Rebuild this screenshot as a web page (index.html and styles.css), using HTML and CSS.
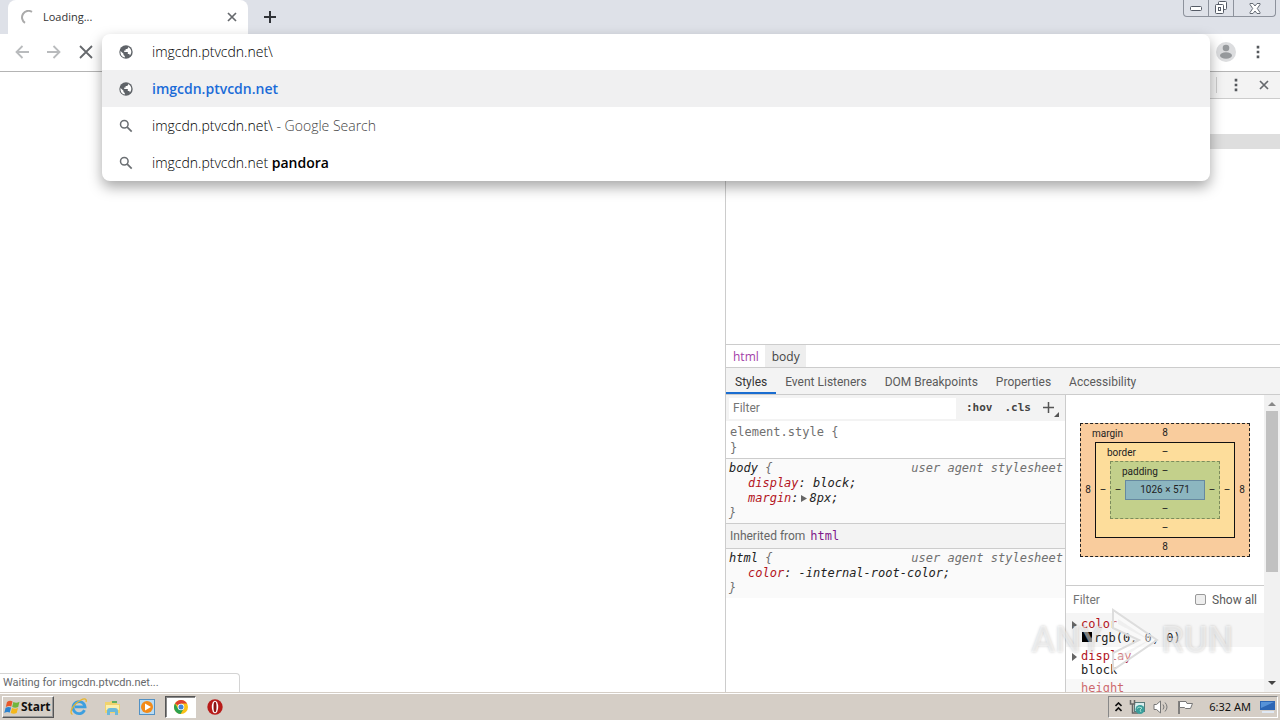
FILE: index.html
```html
<!DOCTYPE html>
<html lang="en">
<head>
<meta charset="utf-8">
<title>Loading...</title>
<link rel="stylesheet" href="styles.css">
</head>
<body>
<svg class="defs" aria-hidden="true">
  <symbol id="globe" viewBox="0 0 14 14"><circle cx="7" cy="7" r="6.7" fill="#5f6368"/><path d="M1.500 6 4.500 8.700v1.200l1.300 1v1.600C2.800 12 1.200 9.500 1.500 6zM6.500 1.500h2.700v1.400L8 4H6.600v1.600H5.200V7h3.600v2h1.500l.6 1.400c2-2.200 2-5.700-.7-7.700L9.200 1.500z" fill="#fff"/></symbol>
  <symbol id="lens" viewBox="0 0 14 14"><circle cx="5.300" cy="5.300" r="3.800" fill="none" stroke="#6b6f73" stroke-width="1.500"/><path d="m8.200 8.200 4.500 4.500" stroke="#6b6f73" stroke-width="1.700"/></symbol>
  <symbol id="dots" viewBox="0 0 4 14"><path d="M.7.800h2.600v2.600H.7zM.7 5.700h2.600v2.600H.7zM.7 10.600h2.600v2.600H.7z" fill="#55585c"/></symbol>
  <symbol id="cross" viewBox="0 0 10 10"><path d="m1 1 8 8M9 1 1 9" stroke="#66696d" stroke-width="1.700"/></symbol>
</svg>

<div class="browser">
  <header class="tabstrip">
    <div class="tab">
      <svg class="spinner" viewBox="0 0 14 14"><path d="M12 1.900A6 6 0 1 0 5 12.800" fill="none" stroke="#aaa" stroke-width="2"/></svg>
      <span class="tab-title">Loading...</span>
      <button class="icon-btn" aria-label="Close tab"><svg width="10" height="10"><use href="#cross"/></svg></button>
    </div>
    <button class="icon-btn new-tab" aria-label="New tab"><svg width="12" height="12" viewBox="0 0 12 12"><path d="M6 0v12M0 6h12" stroke="#303338" stroke-width="2"/></svg></button>
    <div class="window-controls">
      <button aria-label="Minimize"><svg width="12" height="5" viewBox="0 0 12 5"><rect x=".5" y=".5" width="11" height="4" rx="1" fill="#fff" stroke="#555b66"/></svg></button>
      <button aria-label="Restore"><svg width="14" height="14" viewBox="0 0 14 14" fill="#fff" stroke="#555b66"><rect x="4.500" y=".5" width="8" height="8" rx="1"/><rect x="1.500" y="3.500" width="8" height="9" rx="1"/><rect x="4.500" y="6.500" width="2" height="3"/></svg></button>
      <button class="wide" aria-label="Close"><svg width="12" height="11" viewBox="0 0 12 11"><path d="M1 .5h3l2 2.500 2-2.500h3v1L8.300 5.500 11 9.500v1H8L6 8l-2 2.500H1v-1l2.700-4L1 1.500z" fill="#fff" stroke="#666c76"/></svg></button>
    </div>
  </header>

  <nav class="toolbar">
    <button class="icon-btn" aria-label="Back"><svg width="14" height="14" viewBox="0 0 14 14"><path d="M14 7H1.500M7.500 1l-6 6 6 6" fill="none" stroke="#b9bbbd" stroke-width="1.800"/></svg></button>
    <button class="icon-btn" aria-label="Forward"><svg width="14" height="14" viewBox="0 0 14 14"><path d="M0 7h12.500M6.500 1l6 6-6 6" fill="none" stroke="#b9bbbd" stroke-width="1.800"/></svg></button>
    <button class="icon-btn" aria-label="Stop"><svg width="14" height="14" viewBox="0 0 14 14"><path d="m1 1 12 12M13 1 1 13" stroke="#66696d" stroke-width="1.800"/></svg></button>
    <button class="icon-btn profile" aria-label="Profile"><svg width="20" height="20" viewBox="0 0 20 20"><circle cx="10" cy="10" r="10" fill="#dcdddf"/><circle cx="10" cy="6" r="3.300" fill="#96999c"/><ellipse cx="10" cy="13.500" rx="6" ry="3.200" fill="#96999c"/></svg></button>
    <button class="icon-btn" aria-label="Menu"><svg width="4" height="14"><use href="#dots"/></svg></button>

    <div class="omnibox">
      <div class="row"><svg width="14" height="14"><use href="#globe"/></svg><input type="text" aria-label="Address" value="imgcdn.ptvcdn.net\"></div>
      <div class="row selected"><svg width="14" height="14"><use href="#globe"/></svg><a href="#">imgcdn.ptvcdn.net</a></div>
      <div class="row"><svg width="14" height="14"><use href="#lens"/></svg><span>imgcdn.ptvcdn.net\ <i>- Google Search</i></span></div>
      <div class="row"><svg width="14" height="14"><use href="#lens"/></svg><span>imgcdn.ptvcdn.net <b>pandora</b></span></div>
    </div>
  </nav>

  <div class="content">
    <main class="page"><div class="status">Waiting for imgcdn.ptvcdn.net...</div></main>

    <aside class="devtools">
      <div class="dt-toolbar">
        <span class="divider"></span>
        <button class="icon-btn" aria-label="Customize"><svg width="4" height="14"><use href="#dots"/></svg></button>
        <button class="icon-btn" aria-label="Close DevTools"><svg width="10" height="10"><use href="#cross"/></svg></button>
      </div>
      <div class="tree"><div class="tree-line"></div></div>
      <div class="crumbs"><a href="#" class="crumb">html</a><a href="#" class="crumb current">body</a></div>
      <div class="dt-tabs">
        <button class="active">Styles</button><button>Event Listeners</button><button>DOM Breakpoints</button><button>Properties</button><button>Accessibility</button>
      </div>
      <div class="panes">
        <section class="styles">
          <div class="filter-bar">
            <input type="text" placeholder="Filter" aria-label="Filter styles">
            <button>:hov</button><button>.cls</button>
            <button class="add" aria-label="New rule"><svg width="17" height="18" viewBox="0 0 17 18"><path d="M5.500 3v11M0 8.500h11" stroke="#555" stroke-width="1.500"/><path d="M16 13v5h-5z" fill="#555"/></svg></button>
          </div>
          <div class="rule plain"><div class="muted">element.style {</div><div class="muted">}</div></div>
          <div class="rule agent">
            <div class="head"><span>body <span class="muted">{</span></span><span class="muted">user agent stylesheet</span></div>
            <div class="prop"><em>display</em>: block;</div>
            <div class="prop"><em>margin</em>:<svg width="9" height="8" viewBox="0 0 9 8"><path d="M2 1v7l6-3.500z" fill="#666"/></svg><span class="value">8px;</span></div>
            <div class="muted">}</div>
          </div>
          <div class="inherited">Inherited from <a href="#">html</a></div>
          <div class="rule agent last">
            <div class="head"><span>html <span class="muted">{</span></span><span class="muted">user agent stylesheet</span></div>
            <div class="prop"><em>color</em>: -internal-root-color;</div>
            <div class="muted">}</div>
          </div>
        </section>
        <section class="computed">
          <div class="computed-body">
            <div class="metrics">
              <div class="box margin"><span class="name">margin</span><span class="top">8</span><span class="side">8</span>
                <div class="box border"><span class="name">border</span><span class="top">–</span><span class="side">–</span>
                  <div class="box padding"><span class="name">padding</span><span class="top">–</span><span class="side">–</span>
                    <div class="size">1026 × 571</div>
                    <span class="side">–</span><span class="bottom">–</span></div>
                  <span class="side">–</span><span class="bottom">–</span></div>
                <span class="side">8</span><span class="bottom">8</span></div>
            </div>
            <div class="computed-filter"><input type="text" placeholder="Filter" aria-label="Filter computed"><label><input type="checkbox">Show all</label></div>
            <div class="computed-list">
              <div class="item shade"><svg width="6" height="8" viewBox="0 0 6 8"><path d="M0 0v8l5-4z" fill="#666"/></svg><div><em>color</em><br><span class="swatch"></span>rgb(0, 0, 0)</div></div>
              <div class="item"><svg width="6" height="8" viewBox="0 0 6 8"><path d="M0 0v8l5-4z" fill="#666"/></svg><div><em>display</em><br>block</div></div>
              <div class="item shade faded"><span></span><div><em>height</em></div></div>
            </div>
          </div>
          <div class="scrollbar">
            <svg width="8" height="4" viewBox="0 0 8 4"><path d="m0 4 4-4 4 4z" fill="#888"/></svg>
            <span class="thumb"></span>
            <svg width="8" height="4" viewBox="0 0 8 4"><path d="m0 0 4 4 4-4z" fill="#444"/></svg>
          </div>
        </section>
      </div>
    </aside>
  </div>
</div>

<footer class="taskbar">
  <button class="start"><svg width="17" height="17" viewBox="0 0 17 17"><path d="M3 3c2-1.500 4-1.500 5.500-.500L7.300 7.600C5.600 6.700 4 7 1.800 8z" fill="#e8582a"/><path d="M9.300 3c2 1 4 1 6.200-.2L14.200 8c-2 1.100-4 1-6 .1z" fill="#72b63b"/><path d="M1.600 8.800c2-1 3.800-1.100 5.500-.2l-1.300 5c-1.700-.9-3.500-.8-5.500.3z" fill="#2d83cf"/><path d="M8 9c2 .9 4 1 6 0l-1.300 5c-2 1.100-4 1-6 .1z" fill="#f4b71b"/></svg>Start</button>
  <button class="task" aria-label="Internet Explorer"><svg width="18" height="18" viewBox="0 0 18 18"><path d="M14.500 12.200A6 6 0 1 1 15 8.800H5" fill="none" stroke="#3d9fdf" stroke-width="2.800"/><path d="M2.500 16.500C-1.500 15 3 6 11 2c4-2 6-1 5 2" fill="none" stroke="#e8b52c" stroke-width="1.300"/></svg></button>
  <button class="task" aria-label="Explorer"><svg width="17" height="17" viewBox="0 0 17 17"><path d="M1 3h5l1-1h6v3h3v9H1z" fill="#f1d36c"/><path d="M2 6h13v5H2z" fill="#fbefad"/><path d="M3 16v-4q0-3 3-3h5q3 0 3 3v4h-3v-3H6v3z" fill="#6cb9da"/><path d="M8 2h5v2H8z" fill="#61af61"/></svg></button>
  <button class="task" aria-label="Media Player"><svg width="16" height="16" viewBox="0 0 16 16"><rect x=".5" y=".5" width="15" height="15" fill="#b9dbf3" stroke="#5291c4"/><circle cx="8" cy="8" r="6" fill="#f28a18"/><path d="M6 4.500v7L12 8z" fill="#fff"/></svg></button>
  <button class="task pressed" aria-label="Chrome"><svg width="14" height="14" viewBox="0 0 14 14"><circle cx="7" cy="7" r="7" fill="#fbc116"/><path d="M7 7 1 3.400A7 7 0 0 1 13.100 3.600H7z" fill="#df4130"/><path d="M1 3.400A7 7 0 0 0 6.600 14L9.500 9 4 8.500z" fill="#2da14f"/><circle cx="7" cy="7" r="3.300" fill="#fff"/><circle cx="7" cy="7" r="2.500" fill="#4285d8"/></svg></button>
  <button class="task" aria-label="Opera"><svg width="16" height="16" viewBox="0 0 16 16"><circle cx="8" cy="8" r="7.700" fill="#b81b19"/><ellipse cx="8" cy="8" rx="3.200" ry="6.300" fill="#fff"/><ellipse cx="8" cy="8" rx="1.500" ry="5.300" fill="#8b1413"/></svg></button>
  <div class="tray">
    <svg width="7" height="10" viewBox="0 0 7 10"><path d="m.5 4 3-3 3 3M.5 9l3-3 3 3" fill="none" stroke="#111" stroke-width="1.600"/></svg>
    <svg class="net" width="17" height="16" viewBox="0 0 17 16"><rect x="5.500" y="3.500" width="10" height="9" fill="#d8eeee" stroke="#587a7a"/><path d="M1.500 1v4h4V1M3.500 5v9h6" fill="none" stroke="#666" stroke-width="1.500"/><circle cx="11" cy="10.500" r="4.500" fill="#3b9e9b"/><path d="M8 9.500 10 8l3 1-2 2 1 2" fill="none" stroke="#a5dfcf"/></svg>
    <svg width="17" height="14" viewBox="0 0 17 14"><path d="M1 4.500h2.500l4-3.500v12l-4-3.500H1z" fill="#fff" stroke="#777"/><path d="M10 4.500q2 2.500 0 5M12 2.500q4 4.500 0 9" fill="none" stroke="#777"/></svg>
    <svg width="17" height="15" viewBox="0 0 17 15"><path d="M2 1v13" stroke="#666" stroke-width="1.500"/><path d="M2.500 1.500H9l1 2h5.500l-2 5H8.500l-1-1h-5z" fill="#fff" stroke="#777"/></svg>
    <time>6:32 AM</time>
    <svg class="desk" width="16" height="14" viewBox="0 0 16 14"><path d="M0 1h15v9H0z" fill="#2d66b5"/><path d="M1 2h13L1 8z" fill="#5792d8"/><path d="M2 11h12v2H2z" fill="#dfe8f4"/></svg>
  </div>
</footer>

<div class="watermark" aria-hidden="true"><span>ANY</span><svg width="50" height="66" viewBox="0 0 50 66"><path d="M3 3v18l26 12L3 46v17l44-30z" fill="#fff" fill-opacity=".4" stroke="#ddd" stroke-width="2"/><path d="M8 12v5l31 16L8 49v5l32-21z" fill="#e2e2e2" fill-opacity=".4"/></svg><span>RUN</span></div>
</body>
</html>
```

FILE: styles.css
```css
* { box-sizing: border-box; }
body {
  margin: 0;
  height: 100vh;
  display: flex;
  flex-direction: column;
  overflow: hidden;
  font: 12px/16px "Noto Sans", "Open Sans", sans-serif;
  color: #333;
  background: #fff;
}
button, input { font: inherit; color: inherit; margin: 0; padding: 0; border: 0; background: none; }
a { text-decoration: none; color: inherit; }
em { font-style: inherit; color: #b3141c; }
svg { flex: none; }
.defs { position: absolute; width: 0; height: 0; }
.icon-btn { display: flex; align-items: center; justify-content: center; flex: none; }
.browser { flex: 1; min-height: 0; display: flex; flex-direction: column; }

/* Tab strip */
.tabstrip { height: 34px; flex: none; display: flex; align-items: flex-start; padding-left: 8px; background: #dee1e8; }
.tab {
  width: 240px; height: 34px; padding: 0 11px 0 12px;
  display: flex; align-items: center; gap: 9px;
  background: #fff; border-radius: 8px 8px 0 0;
}
.spinner { width: 14px; height: 14px; }
.tab-title { flex: 1; font: 11px/16px "Open Sans", sans-serif; }
.new-tab { width: 44px; height: 34px; }
.window-controls {
  margin-left: auto; margin-right: 4px; display: flex; height: 17px;
  border: 1px solid #8d929c; border-top: 0; border-radius: 0 0 4px 4px;
}
.window-controls button { width: 25px; display: flex; align-items: center; justify-content: center; border-right: 1px solid #8d929c; }
.window-controls .wide { width: 41px; border: 0; }

/* Toolbar and address suggestions */
.toolbar {
  position: relative; height: 38px; flex: none;
  display: flex; align-items: center; gap: 18px; padding: 0 20px 2px 15px;
  background: #fff; border-bottom: 1px solid #b4b4b4;
}
.profile { margin: 0 2px 0 auto; }
.omnibox {
  position: absolute; z-index: 2; top: 0; left: 102px; right: 70px;
  background: #fff; border-radius: 8px; overflow: hidden;
  font: 300 14px/20px "Open Sans", sans-serif; color: #000;
  box-shadow: 0 6px 14px rgba(0, 0, 0, .35);
}
.row { height: 37px; display: flex; align-items: center; gap: 19px; padding: 0 17px; }
.row:first-child { height: 36px; }
.row input { flex: 1; outline: 0; }
.row i { font-style: normal; color: #444; }
.row b { font-weight: 600; }
.selected { background: #f0f0f1; }
.selected a { color: #1a6bd8; font-weight: 600; }

/* Page and devtools */
.content { flex: 1; min-height: 0; display: grid; grid-template-columns: 725fr 555fr; }
.page { display: flex; align-items: flex-end; min-width: 0; }
.status {
  width: 240px; height: 19px; padding: 0 3px;
  font: 11px/18px Roboto, sans-serif; color: #66696c;
  border: 1px solid #d4d4d4; border-left: 0; border-bottom: 0; border-radius: 0 4px 0 0;
}
.devtools { min-width: 0; min-height: 0; display: flex; flex-direction: column; border-left: 1px solid #ccc; color: #5a5a5a; }
.dt-toolbar {
  height: 27px; flex: none; display: flex; align-items: center; justify-content: flex-end;
  gap: 17px; padding-right: 11px; background: #f3f3f3; border-bottom: 1px solid #ccc;
}
.dt-toolbar .icon-btn:last-child { margin-left: 4px; }
.divider { width: 1px; height: 16px; background: #ccc; }
.tree { flex: 1; min-height: 0; padding-top: 35px; }
.tree-line { height: 15px; background: #dedede; }
.crumbs { height: 23px; flex: none; display: flex; border-top: 1px solid #ccc; font: 12px/23px "Open Sans", sans-serif; }
.crumb { padding: 0 6px 0 7px; color: #a33ea8; }
.crumb.current { background: #eee; color: #444; }
.dt-tabs { height: 28px; flex: none; display: flex; background: #f3f3f3; border: solid #ccc; border-width: 1px 0; font: 12px/16px Roboto, sans-serif; }
.dt-tabs button { padding: 3px 9px 0; border-bottom: 2px solid transparent; white-space: nowrap; }
.dt-tabs .active { color: #333; border-color: #1a6dd0; }
.panes { height: 297px; flex: none; display: grid; grid-template-columns: 1fr 215px; }
.styles { min-width: 0; font: italic 12px/15px "DejaVu Sans Mono", monospace; color: #222; }
.filter-bar { height: 26px; display: flex; align-items: center; background: #f3f3f3; font: bold 11px/16px "DejaVu Sans Mono", monospace; color: #444; }
.filter-bar input { flex: 1; min-width: 0; height: 21px; margin: 0 10px 0 3px; padding: 0 4px; background: #fff; font: 12px/20px Roboto, sans-serif; }
::placeholder { color: #757575; opacity: 1; }
.filter-bar button { margin-right: 12px; }
.filter-bar .add { margin-right: 5px; display: flex; }
.muted { color: #707070; }
.rule { padding: 2px 2px 2px 3px; border-bottom: 1px solid #ccc; }
.plain { padding: 3px 4px 2px; font-style: normal; line-height: 16px; }
.agent { background: #fafafa; }
.last { border: 0; }
.head { display: flex; justify-content: space-between; white-space: nowrap; }
.prop { padding-left: 19px; }
.value { padding-left: 2px; }
.inherited { height: 25px; padding: 0 4px; background: #f3f3f3; border-bottom: 1px solid #ccc; font: 12px/24px Roboto, sans-serif; color: #666; }
.inherited a { font-family: "DejaVu Sans Mono", monospace; color: #81178a; margin-left: 2px; }

/* Computed sidebar */
.computed { display: flex; min-width: 0; border-left: 1px solid #ccc; overflow: hidden; }
.computed-body { flex: 1; min-width: 0; }
.metrics { padding: 28px 14px; height: 190px; font: 10px/20px Roboto, sans-serif; color: #222; }
.box {
  position: relative; display: grid; height: 100%;
  grid-template: 18px 1fr 18px / 14px 1fr 14px;
  align-items: center; justify-items: center;
}
.box > .box, .size { grid-area: 2 / 2; align-self: stretch; justify-self: stretch; }
.name { position: absolute; left: 11px; top: 0; }
.top { grid-area: 1 / 2; }
.bottom { grid-area: 3 / 2; }
.side { grid-row: 2; grid-column: 1; }
.box > div + .side { grid-column: 3; }
.margin { background: #f9cc9d; border: 1px dashed #222; }
.border { background: #fddd9b; border: 1px solid #111; }
.padding { background: #c3d08b; border: 1px dashed #7d8c5c; }
.size { background: #8cb6c0; border: 1px solid #6689a0; text-align: center; white-space: nowrap; line-height: 18px; }
.computed-filter { height: 28px; display: flex; align-items: center; justify-content: space-between; padding: 0 7px; border-top: 1px solid #ccc; font: 12px/16px Roboto, sans-serif; }
.computed-filter > input { width: 90px; }
.computed-filter label { display: flex; align-items: center; gap: 6px; }
input[type="checkbox"] { appearance: none; width: 11px; height: 11px; border: 1px solid #999; border-radius: 2px; background: #eee; }
.computed-list { font: 12px/14px "DejaVu Sans Mono", monospace; color: #222; }
.item { display: grid; grid-template-columns: 6px 1fr; gap: 3px; padding: 2px 6px; min-height: 32px; }
.item svg { margin-top: 4px; }
.shade { background: #f5f5f5; }
.item:first-child { padding-top: 4px; min-height: 34px; }
.faded { opacity: .65; }
.swatch { display: inline-block; width: 10px; height: 10px; margin: 0 2px 0 1px; background: #000; }
.scrollbar { width: 16px; padding: 7px 0; display: flex; flex-direction: column; align-items: center; background: #f1f1f1; }
.thumb { width: 12px; height: 161px; margin: 0 0 auto; background: #c1c1c1; }
.scrollbar svg:first-child { margin-bottom: 5px; }

/* Taskbar */
.taskbar {
  height: 28px; flex: none; display: flex; align-items: center; padding: 1px 0 0 2px;
  background: #d5cec6; border-top: 1px solid #d5cec6; box-shadow: inset 0 1px #fff;
  color: #111; font: 12px/16px "Noto Sans", sans-serif;
}
.start {
  width: 52px; height: 22px; display: flex; align-items: center; padding-left: 1px;
  font: bold 12px/18px "Noto Sans", sans-serif; border: 1px solid; border-color: #fff #555 #555 #fff;
  box-shadow: inset -1px -1px #999;
}
.task { width: 31px; height: 22px; margin-left: 3px; display: flex; align-items: center; justify-content: center; }
.start + .task { margin-left: 9px; }
.pressed { background: #fff; border: 1px solid; border-color: #555 #fff #fff #555; box-shadow: inset 1px 1px #888; }
.tray {
  margin-left: auto; height: 22px; display: flex; align-items: center; gap: 7px; padding: 0 1px 0 6px; margin-right: 2px;
  border: 1px solid; border-color: #888 #fff #fff #888;
}
.tray time { margin: 0 2px 0 8px; font-size: 11px; white-space: nowrap; }

/* Overlay mark */
.watermark {
  position: absolute; z-index: 3; right: 47px; bottom: 47px;
  display: flex; align-items: center; pointer-events: none;
  font: 500 36px/66px Roboto, sans-serif; color: rgba(255, 255, 255, .5);
  text-shadow: 0 0 3px rgba(0, 0, 0, .2);
}
.watermark svg { margin: 0 1px 0 8px; }
```
